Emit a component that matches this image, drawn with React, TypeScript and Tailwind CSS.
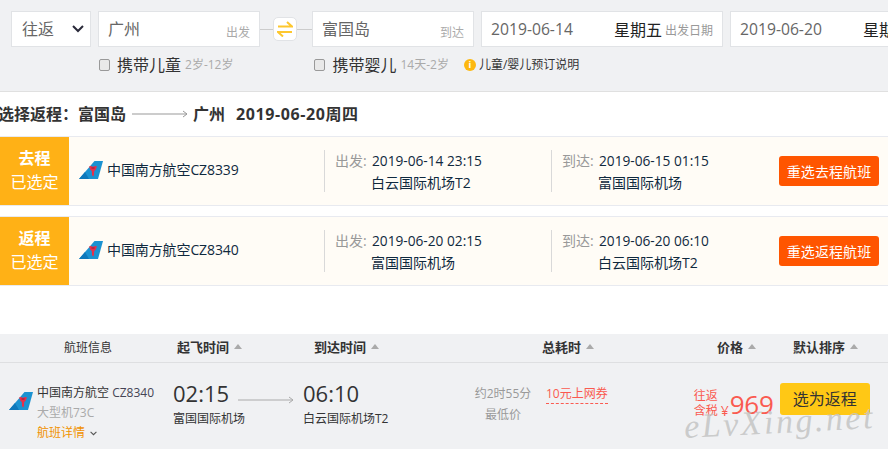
const font = '[font-family:"Open_Sans","Noto_Sans_CJK_SC",sans-serif]'

function TailLogo({ className }: { className: string }) {
  return (
    <svg viewBox="0 0 24 18" className={className}>
      <path d="M0 18 L15.500 0 H24 L19 18 Z" fill="#1b92d1" />
      <path d="M0 18 L6 11 L10 18 Z" fill="#0f78bb" />
      <path d="M10 5.500 C11.500 4.500 13 5 14 6 C15 5 16.500 4.500 18 5.500 L16.500 9 L15.200 10 L15 14 L14 15.500 L13 14 L12.800 10 L11.500 9 Z" fill="#e8304a" />
      <path d="M12.500 7 H15.500" stroke="#7a1730" strokeWidth="0.800" />
    </svg>
  )
}

function SearchBox({ width, city, hint }: { width: string; city: string; hint: string }) {
  return (
    <div className={`${width} h-9 shrink-0 bg-white border border-[#e1e3e6] flex items-center justify-between pl-[9px] pr-[9px]`}>
      <span className="text-[16px] text-[#666] -mt-[1px]">{city}</span>
      <span className="text-[12px] text-[#aaa] mt-[8px]">{hint}</span>
    </div>
  )
}

function DateBox({ width, date, week, hint }: { width: string; date: string; week: string; hint?: string }) {
  return (
    <div className={`${width} h-9 shrink-0 bg-white border border-[#e1e3e6] flex items-center pl-[9px] pr-[9px]`}>
      <span className="w-[82px] shrink-0 text-[15.700px] text-[#666] whitespace-nowrap mt-[1px]">{date}</span>
      <span className="ml-[41px] text-[16px] text-[#222] mt-[2px] whitespace-nowrap">{week}</span>
      {hint && <span className="ml-[3px] text-[12px] text-[#999] mt-[3px] whitespace-nowrap">{hint}</span>}
    </div>
  )
}

function Checkbox() {
  return <span className="block w-[11px] h-[12px] shrink-0 rounded-[2px] border border-[#999] bg-[#e9e9e9]" />
}

function SelectedRow({ tag, flight, depDate, depPort, arrDate, arrPort, btn }: {
  tag: string; flight: string; depDate: string; depPort: string; arrDate: string; arrPort: string; btn: string
}) {
  return (
    <div className="h-[70px] flex items-center bg-[#fffcf6] border-y border-[#e8eaf0]">
      <div className="w-[69px] h-full shrink-0 bg-[#ffb116] flex flex-col items-center justify-center text-white">
        <b className="text-[16px] leading-[24px] font-bold -mt-[2px]">{tag}</b>
        <span className="text-[16px] leading-[24px]">已选定</span>
      </div>
      <TailLogo className="ml-[10px] -mt-[2px] w-[24px] h-[18px] shrink-0" />
      <span className="ml-[4px] -mt-[4px] w-[217px] text-[14px] text-[#10293e] tracking-[-0.1px]">{flight}</span>
      <Leg label="出发:" date={depDate} port={depPort} />
      <Leg label="到达:" date={arrDate} port={arrPort} />
      <button className="ml-[1px] w-[100px] h-[30px] rounded-[3px] bg-[#ff5500] text-white text-[14px] tracking-[0.1px]">{btn}</button>
    </div>
  )
}

function Leg({ label, date, port }: { label: string; date: string; port: string }) {
  return (
    <div className="w-[227px] h-[42px] shrink-0 border-l border-[#d9d9d9] pl-[10px] flex text-[#10293e]">
      <span className="w-[37px] shrink-0 text-[14px] leading-[22px] text-[#999]">{label}</span>
      <div className="text-[14px] leading-[21px] whitespace-nowrap">
        <div className="h-[22px] text-[13.700px]">{date}</div>
        <div className="-ml-[1px]">{port}</div>
      </div>
    </div>
  )
}

function SortHead({ label, className }: { label: string; className: string }) {
  return (
    <div className={`${className} shrink-0 flex items-center font-bold text-[13px] text-[#333]`}>
      {label}
      <span className="ml-[5px] -mt-[3px] w-0 h-0 border-x-[4px] border-x-transparent border-b-[5px] border-b-[#aaa]" />
    </div>
  )
}

export default function App() {
  return (
    <div className={`${font} relative w-[888px] h-[449px] overflow-hidden bg-white`}>
      <div className="h-[92px] bg-[#f0f1f3] border-b border-[#e0e0e0] pt-[11px] pl-[11px]">
        <div className="flex items-center w-[1000px]">
          <div className="w-[80px] h-9 shrink-0 bg-white border border-[#e1e3e6] flex items-center justify-between pl-[10px] pr-[6px]">
            <span className="text-[16px] text-[#666]">往返</span>
            <svg viewBox="0 0 12 8" className="w-[12px] h-[8px]"><path d="M1 1 L6 6 L11 1" fill="none" stroke="#2a2a3a" strokeWidth="2" /></svg>
          </div>
          <div className="ml-[7px]"><SearchBox width="w-[162px]" city="广州" hint="出发" /></div>
          <div className="flex items-center">
            <span className="w-[13px] h-px bg-[#ccc]" />
            <span className="w-[24px] h-[24px] rounded-[5px] border border-[#e1e3e6] bg-white flex items-center justify-center">
              <svg viewBox="0 0 16 16" className="w-[16px] h-[16px]">
                <path d="M1 5.500 H15 L10 1 M15 11 H1 L6 15.500" fill="none" stroke="#fdc72e" strokeWidth="2" />
              </svg>
            </span>
            <span className="w-[15px] h-px bg-[#ccc]" />
          </div>
          <SearchBox width="w-[162px]" city="富国岛" hint="到达" />
          <div className="ml-[7px]"><DateBox width="w-[242px]" date="2019-06-14" week="星期五" hint="出发日期" /></div>
          <div className="ml-[7px]"><DateBox width="w-[242px]" date="2019-06-20" week="星期四" /></div>
        </div>
        <div className="flex items-center mt-[6px] h-[24px]">
          <span className="ml-[88px]"><Checkbox /></span>
          <span className="ml-[7px] text-[16px] text-[#333]">携带儿童</span>
          <span className="ml-[4px] text-[12px] text-[#aaa]">2岁-12岁</span>
          <span className="ml-[81px]"><Checkbox /></span>
          <span className="ml-[7px] text-[16px] text-[#333]">携带婴儿</span>
          <span className="ml-[4px] text-[12px] text-[#aaa]">14天-2岁</span>
          <span className="ml-[15px] w-[12px] h-[12px] rounded-full bg-[#fdb80f] text-white text-[9px] leading-[12px] text-center font-bold">i</span>
          <span className="ml-[3px] text-[12px] text-[#333]">儿童/婴儿预订说明</span>
        </div>
      </div>

      <div className="h-[44px] flex items-center -ml-[2px] font-bold text-[16px] text-[#333]">
        <span>选择返程：富国岛</span>
        <svg viewBox="0 0 56 8" className="ml-[6px] w-[56px] h-[8px] shrink-0"><path d="M0 4 H55 M51 1 L55 4 L51 7" fill="none" stroke="#999" /></svg>
        <span className="ml-[5px]">广州</span>
        <span className="ml-[11px] tracking-[0.6px]">2019-06-20周四</span>
      </div>

      <SelectedRow tag="去程" flight="中国南方航空CZ8339" depDate="2019-06-14 23:15" depPort="白云国际机场T2" arrDate="2019-06-15 01:15" arrPort="富国国际机场" btn="重选去程航班" />
      <div className="h-[10px]" />
      <SelectedRow tag="返程" flight="中国南方航空CZ8340" depDate="2019-06-20 02:15" depPort="富国国际机场" arrDate="2019-06-20 06:10" arrPort="白云国际机场T2" btn="重选返程航班" />

      <div className="mt-[48px] h-[29px] bg-[#f0f1f3] border-b border-[#dedfe1] flex items-center">
        <span className="ml-[64px] w-[113px] shrink-0 text-[12px] text-[#333]">航班信息</span>
        <SortHead label="起飞时间" className="w-[137px]" />
        <SortHead label="到达时间" className="w-[228px]" />
        <SortHead label="总耗时" className="w-[175px]" />
        <SortHead label="价格" className="w-[76px]" />
        <SortHead label="默认排序" className="w-[70px]" />
      </div>

      <div className="h-[87px] bg-[#f0f1f3] flex">
        <TailLogo className="ml-[9px] mt-[29px] w-[24px] h-[18px] shrink-0" />
        <div className="ml-[4px] w-[136px] shrink-0 pt-[20px] whitespace-nowrap">
          <div className="text-[12px] leading-[20px] text-[#333]">中国南方航空 <span className="text-[#445]">CZ8340</span></div>
          <div className="text-[12px] leading-[20px] text-[#aaa]">大型机73C</div>
          <div className="text-[12px] leading-[20px] text-[#f19100] flex items-center">
            航班详情
            <svg viewBox="0 0 8 6" className="ml-[5px] w-[7px] h-[5px]"><path d="M0.500 1 L4 4.500 L7.500 1" fill="none" stroke="#555" strokeWidth="1.300" /></svg>
          </div>
        </div>
        <div className="pt-[16px] w-[65px] shrink-0 whitespace-nowrap">
          <div className="text-[22px] leading-[28px] text-[#333]">02:15</div>
          <div className="mt-[2px] text-[12px] text-[#333] leading-[20px]">富国国际机场</div>
        </div>
        <svg viewBox="0 0 56 8" className="mt-[33px] w-[56px] h-[8px] shrink-0"><path d="M0 4 H55 M51 1 L55 4 L51 7" fill="none" stroke="#aaa" /></svg>
        <div className="ml-[9px] pt-[16px] w-[150px] shrink-0 whitespace-nowrap">
          <div className="text-[22px] leading-[28px] text-[#333]">06:10</div>
          <div className="mt-[2px] text-[12px] text-[#333] leading-[20px]">白云国际机场T2</div>
        </div>
        <div className="ml-[14px] w-[72px] shrink-0 pt-[21px] text-center text-[12px] text-[#999] leading-[20px] whitespace-nowrap">
          <div>约2时55分</div>
          <div className="mt-[1px]">最低价</div>
        </div>
        <div className="ml-[7px] mt-[21px] h-[20px] border-b border-dashed border-[#fa5a50] text-[12px] leading-[20px] text-[#fa5a50] whitespace-nowrap">10元上网券</div>
        <div className="ml-[86px] w-[27px] shrink-0 pt-[25px] text-[12px] leading-[15px] text-[#fa5a50] whitespace-nowrap">往返<br />含税</div>
        <div className="pt-[25px] flex items-start shrink-0 text-[#fa5a50] w-[59px]">
          <span className="text-[14px] mt-[12px]">¥</span>
          <span className="ml-[1px] text-[26px] leading-[32px] tracking-[-0.3px]">969</span>
        </div>
        <button className="mt-[20px] w-[90px] h-[32px] shrink-0 rounded-[3px] bg-[#ffc815] text-[#333] text-[16px]">选为返程</button>
      </div>

      <span className="absolute left-[684px] top-[396px] rotate-[-3deg] [font-family:'Liberation_Serif',serif] italic text-[34px] tracking-[2.500px] text-[#c4c4c4]/85 pointer-events-none whitespace-nowrap">eLvXing.net</span>
    </div>
  )
}
